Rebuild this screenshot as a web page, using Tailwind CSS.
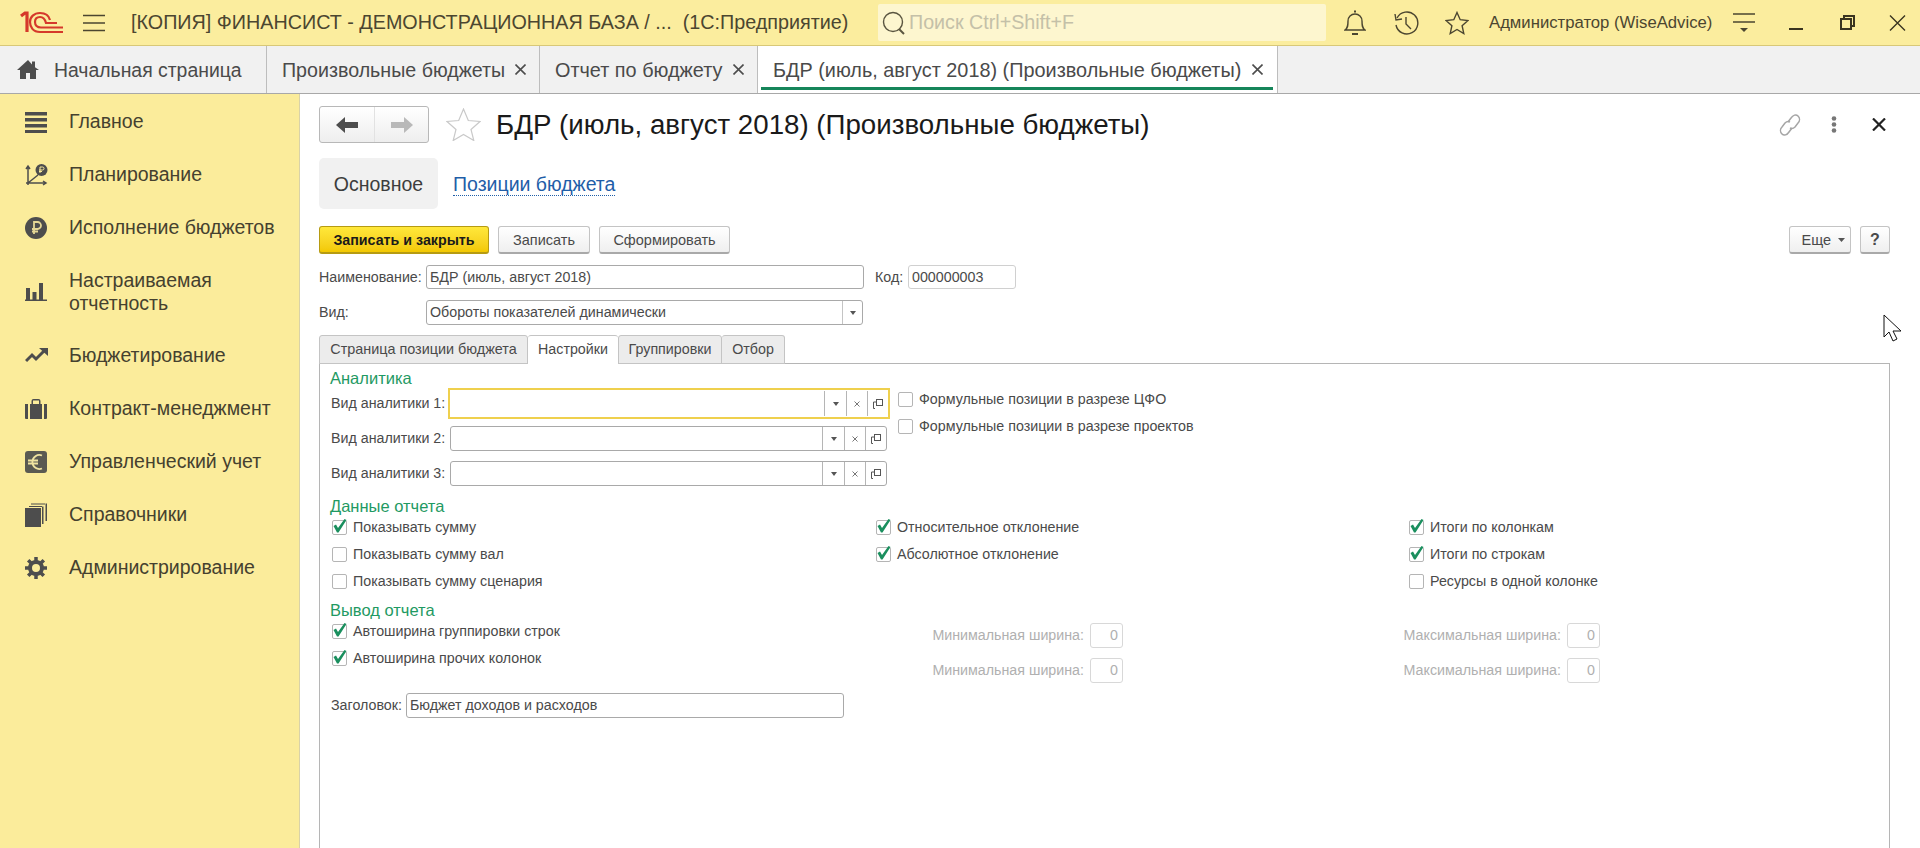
<!DOCTYPE html>
<html lang="ru">
<head>
    <meta charset="UTF-8">
    <title>БДР (июль, август 2018) (Произвольные бюджеты)</title>
    <script src="https://cdn.jsdelivr.net/npm/@tailwindcss/browser@4"></script>
</head>
<body class="relative w-[1920px] h-[848px] overflow-hidden flex flex-col bg-white font-['Liberation_Sans',Arial,sans-serif] text-[#4a4a4a]">

    <!-- Верхняя панель -->
    <header class="h-[46px] shrink-0 flex items-center bg-[#fbed9e] border-b border-[#d8c878] text-[#4b4630]">
        <svg class="ml-[20px] w-[43px] h-[23px]" viewBox="0 0 43 23" fill="none" stroke="#d5392b">
            <path d="M1 5 L5 2 H7 V21" stroke-width="3.2"/>
            <path d="M43 21 H20 C13 21 10 16 10 11 C10 6 14 2 20 2 C26 2 29 5 30 9" stroke-width="2.2"/>
            <path d="M43 16.500 H21 C17 16.500 15 14 15 11 C15 8 17 6 20 6 C23 6 25 8 26 12 H37" stroke-width="2.2"/>
        </svg>
        <svg class="ml-[20px] w-[22px] h-[18px]" viewBox="0 0 22 18" stroke="#4b4630" stroke-width="1.4"><path d="M0 1.5H22M0 9H22M0 16.5H22"/></svg>
        <div class="ml-[26px] w-[725px] text-[19.75px] whitespace-nowrap">[КОПИЯ] ФИНАНСИСТ - ДЕМОНСТРАЦИОННАЯ БАЗА / ...&nbsp; (1С:Предприятие)</div>
        <div class="ml-[22px] w-[448px] h-[37px] flex items-center bg-[#fdf6cf] rounded-[2px]">
            <svg class="ml-[4px] w-[23px] h-[24px]" viewBox="0 0 23 24" fill="none" stroke="#5a5540" stroke-width="1.4"><circle cx="11" cy="11" r="9.5"/><path d="M17 18l5 5" stroke-width="2"/></svg>
            <span class="ml-[4px] text-[19.7px] text-[#c4c0a8]">Поиск Ctrl+Shift+F</span>
        </div>
        <svg class="ml-[18px] w-[22px] h-[26px]" viewBox="0 0 22 26" fill="none" stroke="#4b4630" stroke-width="1.4"><path d="M1 20c3-2 3-5 3-9 0-4 3-7 7-7s7 3 7 7c0 4 0 7 3 9Z"/><path d="M10 1.5h2M8 24h6" stroke-width="2"/></svg>
        <svg class="ml-[28px] w-[25px] h-[24px]" viewBox="0 0 25 24" fill="none" stroke="#4b4630" stroke-width="1.4"><path d="M3 7a11 11 0 1 1-1 7"/><path d="M1 3l1 6 6-1" /><path d="M12 6v7l5 5"/></svg>
        <svg class="ml-[26px] w-[24px] h-[24px]" viewBox="0 0 24 24" fill="none" stroke="#4b4630" stroke-width="1.4"><path d="M12 1.5l3.2 7.2 7.8.8-5.9 5.2 1.7 7.8L12 18.5l-6.8 4 1.7-7.8L1 9.500l7.800-.8Z"/></svg>
        <div class="ml-[20px] w-[244px] text-[16.7px] whitespace-nowrap">Администратор (WiseAdvice)</div>
        <svg class="w-[22px] h-[20px]" viewBox="0 0 22 20" stroke="#4b4630" stroke-width="1.4"><path d="M0 1H22M0 9H22"/><path d="M7 15h8l-4 4Z" fill="#4b4630" stroke="none"/></svg>
        <div class="ml-[34px] w-[14px] h-[2px] mt-[12px] bg-[#3a3520]"></div>
        <svg class="ml-[37px] w-[15px] h-[15px]" viewBox="0 0 15 15" fill="none" stroke="#3a3520" stroke-width="2"><path d="M4 3V1H14V11H12"/><rect x="1" y="4" width="10" height="10"/></svg>
        <svg class="ml-[34px] w-[17px] h-[16px]" viewBox="0 0 17 16" stroke="#3a3520" stroke-width="1.4"><path d="M1 0.500L16 15.500M16 0.500L1 15.500"/></svg>
    </header>

    <!-- Вкладки -->
    <nav class="h-[48px] shrink-0 flex bg-[#f1f1f1] border-b border-[#a8a8a8] text-[#4a4a4a] whitespace-nowrap">
        <div class="w-[267px] flex items-center border-r border-[#bdbdbd]">
            <svg class="ml-[17px] w-[22px] h-[19px]" viewBox="0 0 22 19" fill="#4d4d4d"><path d="M11 0L0 10h3v9h6v-6h4v6h6v-9h3L18 7.300V1.500h-3v3Z"/></svg>
            <span class="ml-[15px] pt-[2px] text-[19.4px]">Начальная страница</span>
        </div>
        <div class="w-[273px] flex items-center pl-[15px] border-r border-[#bdbdbd]">
            <span class="w-[233px] pt-[2px] text-[19.65px]">Произвольные бюджеты</span>
            <svg class="w-[11px] h-[11px]" viewBox="0 0 11 11" stroke="#4d4d4d" stroke-width="1.6"><path d="M0.500 0.500L10.500 10.500M10.500 0.500L0.500 10.500"/></svg>
        </div>
        <div class="w-[218px] flex items-center pl-[15px] border-r border-[#bdbdbd]">
            <span class="w-[178px] pt-[2px] text-[19.85px]">Отчет по бюджету</span>
            <svg class="w-[11px] h-[11px]" viewBox="0 0 11 11" stroke="#4d4d4d" stroke-width="1.6"><path d="M0.500 0.500L10.500 10.500M10.500 0.500L0.500 10.500"/></svg>
        </div>
        <div class="relative w-[520px] flex items-center pl-[15px] bg-white border-r border-[#bdbdbd]">
            <span class="w-[479px] pt-[2px] text-[19.85px]">БДР (июль, август 2018) (Произвольные бюджеты)</span>
            <svg class="w-[11px] h-[11px]" viewBox="0 0 11 11" stroke="#4d4d4d" stroke-width="1.6"><path d="M0.500 0.500L10.500 10.500M10.500 0.500L0.500 10.500"/></svg>
            <div class="absolute left-[3px] right-[4px] bottom-[3px] h-[3px] bg-[#16855a]"></div>
        </div>
    </nav>

    <div class="flex-1 flex min-h-0">
        <!-- Меню разделов -->
        <aside class="w-[300px] shrink-0 pt-[1px] bg-[#fbec9b] border-r border-[#d9d2a8] text-[19.5px] text-[#45412f]">
            <div class="h-[53px] flex items-center">
                <svg class="ml-[25px] w-[22px] h-[22px]" viewBox="0 0 22 22" fill="#4d4d4d"><path d="M0 1h22v3.500H0ZM0 7h22v3.500H0ZM0 13h22v3.500H0ZM0 19h22v3H0Z"/></svg>
                <span class="ml-[22px]">Главное</span>
            </div>
            <div class="h-[53px] flex items-center">
                <svg class="ml-[25px] w-[23px] h-[24px]" viewBox="0 0 23 24" fill="none" stroke="#4d4d4d" stroke-width="1.500"><path d="M3 22V3M1 6l2-3 2 3M1 20h20M18 18l3 2-3 2M3 20L13 12"/><circle cx="16.500" cy="7" r="6" fill="#4d4d4d" stroke="none"/><path d="M15 10V4h2.500a1.500 1.500 0 0 1 0 3H14M14 8.500h3" stroke="#fbec9b" stroke-width="1"/></svg>
                <span class="ml-[21px]">Планирование</span>
            </div>
            <div class="h-[53px] flex items-center">
                <svg class="ml-[25px] w-[22px] h-[22px]" viewBox="0 0 22 22"><circle cx="11" cy="11" r="11" fill="#4d4d4d"/><path d="M9 17V5h3.500a3.500 3.500 0 0 1 0 7H7M7 14.500h6" fill="none" stroke="#e5d795" stroke-width="1.800"/></svg>
                <span class="ml-[22px]">Исполнение бюджетов</span>
            </div>
            <div class="h-[75px] flex items-center">
                <svg class="ml-[25px] w-[22px] h-[18px]" viewBox="0 0 22 18" fill="#4d4d4d"><path d="M1 5h4v13H1ZM7.500 9h4v9h-4ZM14 0h4v18h-4ZM0 16.500h22V18H0Z"/></svg>
                <span class="ml-[22px] leading-[23px]">Настраиваемая<br>отчетность</span>
            </div>
            <div class="h-[53px] flex items-center">
                <svg class="ml-[25px] w-[23px] h-[15px]" viewBox="0 0 23 15" fill="none" stroke="#4d4d4d" stroke-width="3"><path d="M1 13l6-6 4 4 8-8"/><path d="M14 0h9v8Z" fill="#4d4d4d" stroke="none"/></svg>
                <span class="ml-[21px]">Бюджетирование</span>
            </div>
            <div class="h-[53px] flex items-center">
                <svg class="ml-[25px] w-[22px] h-[20px]" viewBox="0 0 22 20" fill="#4d4d4d"><path d="M0 5h3v15H1a1 1 0 0 1-1-1ZM19 5h3v14a1 1 0 0 1-1 1h-2ZM5 5h1.500V2a2 2 0 0 1 2-2h5a2 2 0 0 1 2 2v3H17v15H5Z"/><path d="M8 5V1.500h6V5Z" fill="#fbec9b"/></svg>
                <span class="ml-[22px]">Контракт-менеджмент</span>
            </div>
            <div class="h-[53px] flex items-center">
                <svg class="ml-[25px] w-[22px] h-[22px]" viewBox="0 0 22 22"><rect width="22" height="22" rx="3" fill="#5a5a52"/><path d="M17 4.500a7 7 0 1 0 0 13M3 9.500h10M3 12.500h10" fill="none" stroke="#efe3a0" stroke-width="1.800"/></svg>
                <span class="ml-[22px]">Управленческий учет</span>
            </div>
            <div class="h-[53px] flex items-center">
                <svg class="ml-[25px] w-[22px] h-[24px]" viewBox="0 0 22 24" fill="#4d4d4d"><path d="M0 5h16v19H0Z"/><path d="M17 3.500h1.500V21H17ZM20.500 0.500H22V18h-1.500ZM4 3h13v1H4ZM6 0.500h14v1H6Z"/></svg>
                <span class="ml-[22px]">Справочники</span>
            </div>
            <div class="h-[53px] flex items-center">
                <svg class="ml-[25px] w-[22px] h-[22px]" viewBox="0 0 22 22" fill="none" stroke="#4d4d4d"><circle cx="11" cy="11" r="6" stroke-width="4"/><path d="M11 0v4M11 18v4M0 11h4M18 11h4M3.200 3.200l2.900 2.900M15.900 15.900l2.900 2.900M18.800 3.200l-2.900 2.900M6.100 15.900l-2.900 2.900" stroke-width="3.500"/></svg>
                <span class="ml-[22px]">Администрирование</span>
            </div>
        </aside>

        <!-- Форма -->
        <main class="flex-1 min-w-0 flex flex-col pl-[19px] pr-[30px] text-[14.25px] leading-[21px]">
            <div class="mt-[12px] h-[37px] shrink-0 flex items-center">
                <div class="w-[110px] h-[37px] flex border border-[#b8b8b8] rounded-[3px] bg-gradient-to-b from-white to-[#eeeeee]">
                    <div class="w-[55px] flex items-center justify-center border-r border-[#e2e2e2]">
                        <svg class="w-[22px] h-[16px]" viewBox="0 0 22 16" fill="#4d4d4d"><path d="M0 8l9-8v5h13v6H9v5Z"/></svg>
                    </div>
                    <div class="flex-1 flex items-center justify-center">
                        <svg class="w-[22px] h-[16px]" viewBox="0 0 22 16" fill="#b9b9b9"><path d="M22 8l-9-8v5H0v6h13v5Z"/></svg>
                    </div>
                </div>
                <svg class="ml-[17px] w-[35px] h-[33px]" viewBox="0 0 35 33" fill="none" stroke="#c9c9c9" stroke-width="1.200"><path d="M17.500 1l4.800 11.500L34 13.500l-9 8 2.800 11L17.500 26.500 7.200 32.500l2.800-11-9-8 11.700-1Z"/></svg>
                <h1 class="ml-[15px] text-[27.7px] leading-[37px] text-[#1a1a1a] whitespace-nowrap">БДР (июль, август 2018) (Произвольные бюджеты)</h1>
                <svg class="ml-auto w-[24px] h-[22px]" viewBox="0 0 24 22" fill="none" stroke="#a5a5a5" stroke-width="1.500"><path d="M10 8l3-4c2-3 5-4 7-2s2 5 0 7l-3 4c-1 1-3 2-5 1"/><path d="M14 14l-3 4c-2 3-5 4-7 2s-2-5 0-7l3-4c1-1 3-2 5-1"/></svg>
                <svg class="ml-[29px] w-[6px] h-[17px]" viewBox="0 0 6 17" fill="#777777"><circle cx="3" cy="2.500" r="2.300"/><circle cx="3" cy="8.500" r="2.300"/><circle cx="3" cy="14.500" r="2.300"/></svg>
                <svg class="ml-[35px] mr-[4px] w-[14px] h-[13px]" viewBox="0 0 14 13" stroke="#222222" stroke-width="2.200"><path d="M1 0.500L13 12.500M13 0.500L1 12.500"/></svg>
            </div>

            <div class="mt-[15px] h-[51px] shrink-0 flex items-center text-[19.5px]">
                <div class="w-[119px] h-[51px] pt-[1px] flex items-center justify-center bg-[#f1f1f1] rounded-[5px] text-[#3d3d3d]">Основное</div>
                <a class="ml-[15px] mt-[2px] text-[#1f5ea8] border-b border-dotted border-[#1f5ea8] leading-[21px]">Позиции бюджета</a>
            </div>

            <div class="mt-[17px] h-[28px] shrink-0 flex">
                <button class="w-[170px] h-[28px] pt-[2px] rounded-[3px] border border-[#b69b12] border-b-2 bg-gradient-to-b from-[#ffe83a] to-[#f3c800] font-bold text-[#1a1a1a]">Записать и закрыть</button>
                <button class="ml-[9px] w-[92px] h-[28px] pt-[2px] rounded-[3px] border border-[#c4c4c4] border-b-2 border-b-[#a9a9a9] bg-gradient-to-b from-white to-[#efefef] text-[14.5px]">Записать</button>
                <button class="ml-[9px] w-[131px] h-[28px] pt-[2px] rounded-[3px] border border-[#c4c4c4] border-b-2 border-b-[#a9a9a9] bg-gradient-to-b from-white to-[#efefef] text-[14.5px]">Сформировать</button>
                <button class="ml-auto w-[62px] h-[28px] pt-[1px] rounded-[3px] border border-[#c4c4c4] border-b-2 border-b-[#a9a9a9] bg-gradient-to-b from-white to-[#efefef] flex items-center justify-end pr-[5px] gap-[7px] text-[14.5px]">Еще<svg class="w-[7px] h-[4px]" viewBox="0 0 7 4" fill="#555555"><path d="M0 0h7L3.500 4Z"/></svg></button>
                <button class="ml-[9px] w-[30px] h-[28px] rounded-[3px] border border-[#c4c4c4] border-b-2 border-b-[#a9a9a9] bg-gradient-to-b from-white to-[#efefef] font-bold text-[16px]">?</button>
            </div>

            <div class="mt-[11px] h-[24px] shrink-0 flex items-center">
                <span class="w-[107px] pt-[1px]">Наименование:</span>
                <div class="w-[438px] h-[24px] pt-[1px] flex items-center pl-[3px] border border-[#a9a9a9] rounded-[3px]">БДР (июль, август 2018)</div>
                <span class="ml-[11px] w-[33px] pt-[1px]">Код:</span>
                <div class="w-[108px] h-[24px] pt-[1px] flex items-center pl-[3px] border border-[#d0d0d0] rounded-[3px]">000000003</div>
            </div>
            <div class="mt-[11px] h-[25px] shrink-0 flex items-center">
                <span class="w-[107px]">Вид:</span>
                <div class="w-[437px] h-[25px] flex items-center pl-[3px] border border-[#a9a9a9] rounded-[3px]">
                    <span class="flex-1">Обороты показателей динамически</span>
                    <div class="w-[20px] h-full flex items-center justify-center border-l border-[#c4c4c4]"><svg class="w-[6px] h-[4px]" viewBox="0 0 6 4" fill="#555555"><path d="M0 0h6L3 4Z"/></svg></div>
                </div>
            </div>

            <div class="mt-[10px] h-[29px] shrink-0 flex relative z-10 -mb-px">
                <div class="w-[209px] pb-[1px] flex items-center justify-center bg-[#ececec] border border-[#c4c4c4] rounded-t-[3px] text-[14.4px]">Страница позиции бюджета</div>
                <div class="w-[90px] pb-[1px] flex items-center justify-center bg-white border-t border-[#c4c4c4] rounded-t-[3px]">Настройки</div>
                <div class="w-[104px] pb-[1px] flex items-center justify-center bg-[#ececec] border border-[#c4c4c4] rounded-t-[3px]">Группировки</div>
                <div class="w-[63px] pb-[1px] flex items-center justify-center bg-[#ececec] border border-l-0 border-[#c4c4c4] rounded-t-[3px]">Отбор</div>
            </div>

            <section class="flex-1 min-h-0 border-x border-t border-[#b5b5b5] pl-[10px]">
                <h2 class="mt-[4px] -mb-px h-[19px] flex items-center text-[16.5px] leading-[20px] text-[#1f9a63]">Аналитика</h2>
                <div class="flex">
                    <div class="w-[568px]">
                        <div class="h-[35px] flex items-center">
                            <span class="w-[118px] pl-[1px]">Вид аналитики 1:</span>
                            <div class="w-[442px] h-[31px] flex justify-end items-center border-2 border-[#efd04e]">
                                <div class="w-[22px] h-[25px] flex items-center justify-center border-l border-[#b5b5b5]"><svg class="w-[6px] h-[4px]" viewBox="0 0 6 4" fill="#555555"><path d="M0 0h6L3 4Z"/></svg></div>
                                <div class="w-[21px] h-[25px] flex items-center justify-center border-l border-[#b5b5b5]"><svg class="w-[6px] h-[6px]" viewBox="0 0 6 6" stroke="#777777"><path d="M0.500 0.500l5 5M5.500 0.500l-5 5"/></svg></div>
                                <div class="w-[21px] h-[25px] flex items-center justify-center border-l border-[#b5b5b5]"><svg class="w-[10px] h-[10px]" viewBox="0 0 10 10" fill="none" stroke="#555555"><rect x="3.500" y="0.500" width="6" height="6"/><path d="M3.500 3H0.500V9.500H2"/></svg></div>
                            </div>
                        </div>
                        <div class="h-[35px] flex items-center">
                            <span class="w-[120px] pl-[1px]">Вид аналитики 2:</span>
                            <div class="w-[437px] h-[25px] flex justify-end border border-[#a9a9a9] rounded-[3px]">
                                <div class="w-[22px] flex items-center justify-center border-l border-[#b5b5b5]"><svg class="w-[6px] h-[4px]" viewBox="0 0 6 4" fill="#555555"><path d="M0 0h6L3 4Z"/></svg></div>
                                <div class="w-[21px] flex items-center justify-center border-l border-[#b5b5b5]"><svg class="w-[6px] h-[6px]" viewBox="0 0 6 6" stroke="#777777"><path d="M0.500 0.500l5 5M5.500 0.500l-5 5"/></svg></div>
                                <div class="w-[21px] flex items-center justify-center border-l border-[#b5b5b5]"><svg class="w-[10px] h-[10px]" viewBox="0 0 10 10" fill="none" stroke="#555555"><rect x="3.500" y="0.500" width="6" height="6"/><path d="M3.500 3H0.500V9.500H2"/></svg></div>
                            </div>
                        </div>
                        <div class="h-[35px] flex items-center">
                            <span class="w-[120px] pl-[1px]">Вид аналитики 3:</span>
                            <div class="w-[437px] h-[25px] flex justify-end border border-[#a9a9a9] rounded-[3px]">
                                <div class="w-[22px] flex items-center justify-center border-l border-[#b5b5b5]"><svg class="w-[6px] h-[4px]" viewBox="0 0 6 4" fill="#555555"><path d="M0 0h6L3 4Z"/></svg></div>
                                <div class="w-[21px] flex items-center justify-center border-l border-[#b5b5b5]"><svg class="w-[6px] h-[6px]" viewBox="0 0 6 6" stroke="#777777"><path d="M0.500 0.500l5 5M5.500 0.500l-5 5"/></svg></div>
                                <div class="w-[21px] flex items-center justify-center border-l border-[#b5b5b5]"><svg class="w-[10px] h-[10px]" viewBox="0 0 10 10" fill="none" stroke="#555555"><rect x="3.500" y="0.500" width="6" height="6"/><path d="M3.500 3H0.500V9.500H2"/></svg></div>
                            </div>
                        </div>
                    </div>
                    <div class="pt-[3px] flex flex-col gap-[7px]">
                        <label class="h-[20px] flex items-center gap-[6px]"><span class="w-[15px] h-[15px] border border-[#b5b5b5] rounded-[2px]"></span>Формульные позиции в разрезе ЦФО</label>
                        <label class="h-[20px] flex items-center gap-[6px]"><span class="w-[15px] h-[15px] border border-[#b5b5b5] rounded-[2px]"></span>Формульные позиции в разрезе проектов</label>
                    </div>
                </div>

                <h2 class="mt-[4px] h-[22px] flex items-center text-[16.5px] leading-[20px] text-[#1f9a63]">Данные отчета</h2>
                <div class="grid grid-cols-[546px_533px_1fr] gap-y-[7px]">
                    <label class="ml-[2px] h-[20px] flex items-center gap-[6px]"><span class="relative w-[15px] h-[15px] border border-[#b5b5b5] rounded-[2px]"><svg class="absolute -left-px -top-[3px] w-[15px] h-[16px]" viewBox="0 0 15 16" fill="#1a8f5e"><path d="M1.500 8l2.500-1.500L6 10 12.500 1 14.500 2 6.500 14.500H5Z"/></svg></span>Показывать сумму</label>
                    <label class="h-[20px] flex items-center gap-[6px]"><span class="relative w-[15px] h-[15px] border border-[#b5b5b5] rounded-[2px]"><svg class="absolute -left-px -top-[3px] w-[15px] h-[16px]" viewBox="0 0 15 16" fill="#1a8f5e"><path d="M1.500 8l2.500-1.500L6 10 12.500 1 14.500 2 6.500 14.500H5Z"/></svg></span>Относительное отклонение</label>
                    <label class="h-[20px] flex items-center gap-[6px]"><span class="relative w-[15px] h-[15px] border border-[#b5b5b5] rounded-[2px]"><svg class="absolute -left-px -top-[3px] w-[15px] h-[16px]" viewBox="0 0 15 16" fill="#1a8f5e"><path d="M1.500 8l2.500-1.500L6 10 12.500 1 14.500 2 6.500 14.500H5Z"/></svg></span>Итоги по колонкам</label>
                    <label class="ml-[2px] h-[20px] flex items-center gap-[6px]"><span class="w-[15px] h-[15px] border border-[#b5b5b5] rounded-[2px]"></span>Показывать сумму вал</label>
                    <label class="h-[20px] flex items-center gap-[6px]"><span class="relative w-[15px] h-[15px] border border-[#b5b5b5] rounded-[2px]"><svg class="absolute -left-px -top-[3px] w-[15px] h-[16px]" viewBox="0 0 15 16" fill="#1a8f5e"><path d="M1.500 8l2.500-1.500L6 10 12.500 1 14.500 2 6.500 14.500H5Z"/></svg></span>Абсолютное отклонение</label>
                    <label class="h-[20px] flex items-center gap-[6px]"><span class="relative w-[15px] h-[15px] border border-[#b5b5b5] rounded-[2px]"><svg class="absolute -left-px -top-[3px] w-[15px] h-[16px]" viewBox="0 0 15 16" fill="#1a8f5e"><path d="M1.500 8l2.500-1.500L6 10 12.500 1 14.500 2 6.500 14.500H5Z"/></svg></span>Итоги по строкам</label>
                    <label class="ml-[2px] h-[20px] flex items-center gap-[6px]"><span class="w-[15px] h-[15px] border border-[#b5b5b5] rounded-[2px]"></span>Показывать сумму сценария</label>
                    <div></div>
                    <label class="h-[20px] flex items-center gap-[6px]"><span class="w-[15px] h-[15px] border border-[#b5b5b5] rounded-[2px]"></span>Ресурсы в одной колонке</label>
                </div>

                <h2 class="mt-[8px] h-[22px] flex items-center text-[16.5px] leading-[20px] text-[#1f9a63]">Вывод отчета</h2>
                <div class="grid grid-cols-[546px_247px_477px]">
                    <div class="ml-[2px] flex flex-col gap-[7px]">
                        <label class="h-[20px] flex items-center gap-[6px]"><span class="relative w-[15px] h-[15px] border border-[#b5b5b5] rounded-[2px]"><svg class="absolute -left-px -top-[3px] w-[15px] h-[16px]" viewBox="0 0 15 16" fill="#1a8f5e"><path d="M1.500 8l2.500-1.500L6 10 12.500 1 14.500 2 6.500 14.500H5Z"/></svg></span>Автоширина группировки строк</label>
                        <label class="h-[20px] flex items-center gap-[6px]"><span class="relative w-[15px] h-[15px] border border-[#b5b5b5] rounded-[2px]"><svg class="absolute -left-px -top-[3px] w-[15px] h-[16px]" viewBox="0 0 15 16" fill="#1a8f5e"><path d="M1.500 8l2.500-1.500L6 10 12.500 1 14.500 2 6.500 14.500H5Z"/></svg></span>Автоширина прочих колонок</label>
                    </div>
                    <div class="mt-[2px] flex flex-col gap-[10px] text-[#b0b0b0] whitespace-nowrap">
                        <div class="h-[25px] flex items-center justify-end gap-[6px]">Минимальная ширина:<span class="w-[33px] h-[25px] flex items-center justify-end pr-[4px] border border-[#d8d8d8] rounded-[3px]">0</span></div>
                        <div class="h-[25px] flex items-center justify-end gap-[6px]">Минимальная ширина:<span class="w-[33px] h-[25px] flex items-center justify-end pr-[4px] border border-[#d8d8d8] rounded-[3px]">0</span></div>
                    </div>
                    <div class="mt-[2px] flex flex-col gap-[10px] text-[#b0b0b0] whitespace-nowrap">
                        <div class="h-[25px] flex items-center justify-end gap-[6px]">Максимальная ширина:<span class="w-[33px] h-[25px] flex items-center justify-end pr-[4px] border border-[#d8d8d8] rounded-[3px]">0</span></div>
                        <div class="h-[25px] flex items-center justify-end gap-[6px]">Максимальная ширина:<span class="w-[33px] h-[25px] flex items-center justify-end pr-[4px] border border-[#d8d8d8] rounded-[3px]">0</span></div>
                    </div>
                </div>

                <div class="mt-[10px] h-[25px] flex items-center">
                    <span class="w-[76px] pl-[1px] pb-[1px]">Заголовок:</span>
                    <div class="w-[438px] h-[25px] pb-[1px] flex items-center pl-[3px] border border-[#a9a9a9] rounded-[3px]">Бюджет доходов и расходов</div>
                </div>
            </section>
        </main>
    </div>

    <!-- Курсор -->
    <svg class="absolute left-[1883px] top-[314px] w-[19px] h-[28px]" viewBox="0 0 19 28" fill="white" stroke="#111111" stroke-width="1"><path d="M1 1V23L6 18L10 27L14 25L10 17H18Z"/></svg>
</body>
</html>
